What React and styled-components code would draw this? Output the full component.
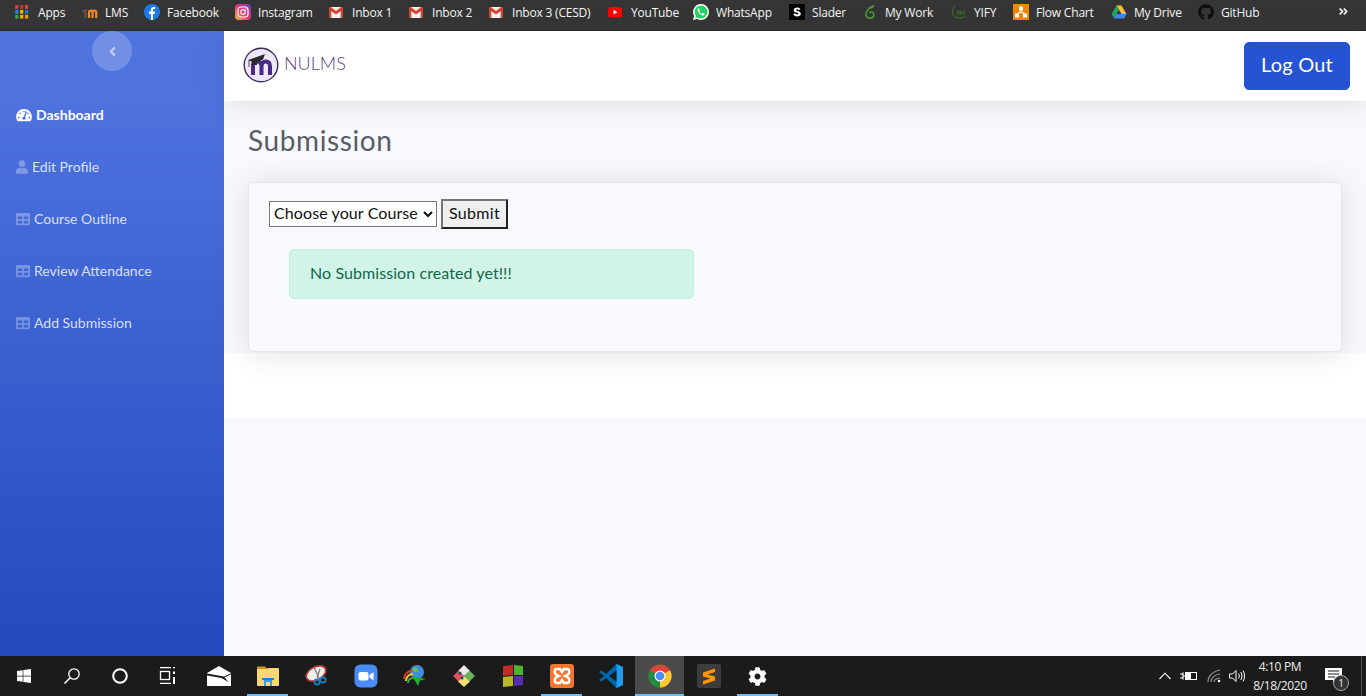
import React from 'react'
import styled, { createGlobalStyle } from 'styled-components'
import { FaTachometerAlt, FaUser, FaTable, FaAngleLeft, FaWindows, FaGithub, FaCog, FaAngleDoubleRight } from 'react-icons/fa'

const GlobalStyle = createGlobalStyle`
  html, body { margin: 0; padding: 0; height: 100%; overflow: hidden; }
  body { font-family: Lato, "Noto Sans", sans-serif; background: #f8f9fc; }
  * { box-sizing: border-box; }
`

const Screen = styled.div`
  width: 1366px;
  height: 696px;
  display: flex;
  flex-direction: column;
  overflow: hidden;
`

/* bookmarks */
const BookmarkBar = styled.div`
  height: 31px;
  flex: none;
  display: flex;
  align-items: center;
  padding: 0 0 6px 15px;
  background: #353535;
  border-bottom: 1px solid #2a2a2a;
  color: #f7f7f7;
  font-family: "Open Sans", sans-serif;
  font-size: 12px;
  letter-spacing: -0.2px;
`

const Bookmark = styled.div`
  width: ${p => p.$w}px;
  flex: none;
  display: flex;
  align-items: center;
  gap: 7px;
  white-space: nowrap;
  svg { display: block; flex: none; }
`

const MoreBookmarks = styled.div`
  margin-left: auto;
  width: 28px;
  height: 12px;
  color: #f1f1f1;
  font-size: 11px;
  svg { display: block; }
`

/* page */
const Body = styled.div`
  flex: 1;
  min-height: 0;
  display: flex;
`

const Sidebar = styled.nav`
  width: 224px;
  flex: none;
  display: flex;
  flex-direction: column;
  background: linear-gradient(180deg, #4e73df 10%, #224abe 100%);
`

const ToggleRow = styled.div`
  display: flex;
  justify-content: center;
  margin-bottom: 18px;
`

const Toggle = styled.div`
  width: 40px;
  height: 40px;
  border-radius: 50%;
  background: rgba(255, 255, 255, 0.2);
  color: rgba(255, 255, 255, 0.55);
  display: flex;
  align-items: center;
  justify-content: center;
  font-size: 15px;
`

const NavItem = styled.div`
  height: 52px;
  display: flex;
  align-items: center;
  gap: 4px;
  padding: 0 0 1px 16px;
  font-size: 14px;
  font-weight: ${p => (p.$active ? 700 : 400)};
  color: ${p => (p.$active ? '#fff' : 'rgba(255,255,255,0.8)')};
  svg {
    width: ${p => p.$iconWidth}px;
    height: 14px;
    flex: none;
    color: ${p => (p.$active ? '#fff' : 'rgba(255,255,255,0.3)')};
  }
`

const Main = styled.div`
  flex: 1;
  min-width: 0;
  display: flex;
  flex-direction: column;
  background: #f8f9fc;
`

const Topbar = styled.header`
  height: 70px;
  flex: none;
  position: relative;
  z-index: 2;
  display: flex;
  align-items: center;
  justify-content: space-between;
  padding: 0 16px 0 19px;
  background: #fff;
  box-shadow: 0 2px 28px rgba(58, 59, 69, 0.15);
`

const Brand = styled.div`
  display: flex;
  align-items: center;
  gap: 5px;
  color: #5b3f80;
  font-size: 18px;
  font-weight: 300;
  margin-bottom: 2px;
  span { margin-bottom: 5px; }
`

const LogoutButton = styled.button`
  width: 106px;
  height: 48px;
  border: 1px solid #2653d4;
  border-radius: 5px;
  background: #2653d4;
  color: #fff;
  font-family: inherit;
  font-size: 20px;
  letter-spacing: 0.2px;
  padding: 0 0 4px;
`

const Container = styled.div`
  padding: 0 24px 1px;
`

const Heading = styled.h3`
  margin: 0;
  padding-top: 20px;
  height: 81px;
  color: #5a5c69;
  font-size: 28px;
  line-height: 38px;
  font-weight: 400;
  letter-spacing: 0.6px;
`

const Card = styled.section`
  position: relative;
  z-index: 1;
  height: 170px;
  padding: 16px 20px;
  background: #f8f9fc;
  border: 1px solid #e3e6f0;
  border-radius: 5px;
  box-shadow: 0 2px 28px rgba(58, 59, 69, 0.15);
`

const Form = styled.form`
  display: flex;
  align-items: center;
  gap: 4px;
  height: 30px;
`

const Select = styled.select`
  width: 168px;
  height: 26px;
  padding-bottom: 3px;
  font-family: inherit;
  font-size: 16px;
  letter-spacing: 0.1px;
  color: #111;
  background: #fff;
`

const SubmitButton = styled.button`
  width: 67px;
  height: 30px;
  padding: 0 0 3px;
  font-family: inherit;
  font-size: 16px;
  letter-spacing: 0.3px;
  color: #111;
  background: #efefef;
  border: 2px solid;
  border-color: #767676 #222 #222 #767676;
`

const Alert = styled.div`
  width: 405px;
  height: 50px;
  margin: 20px 0 0 20px;
  padding: 0 20px 4px;
  display: flex;
  align-items: center;
  color: #0f6848;
  background: #d2f4e8;
  border: 1px solid #bff0de;
  border-radius: 5px;
  font-size: 16px;
  letter-spacing: 0.08px;
`

const WhiteBand = styled.div`
  height: 64px;
  background: #fff;
`

/* windows taskbar */
const Taskbar = styled.footer`
  height: 40px;
  flex: none;
  display: flex;
  align-items: stretch;
  background: #1b1b1b;
  color: #fff;
`

const SystemButton = styled.div`
  width: 48px;
  flex: none;
  display: flex;
  align-items: center;
  justify-content: center;
`

const Pinned = styled.div`
  display: flex;
  margin-left: 2px;
`

const AppButton = styled.div`
  position: relative;
  width: 49px;
  flex: none;
  display: flex;
  align-items: center;
  justify-content: center;
  background: ${p => (p.$focused ? '#4a4a4a' : 'transparent')};
  &::after {
    content: '';
    display: ${p => (p.$open ? 'block' : 'none')};
    position: absolute;
    bottom: 0;
    left: ${p => (p.$focused ? 0 : 4)}px;
    right: ${p => (p.$focused ? 0 : 4)}px;
    height: 2px;
    background: #76b9ed;
  }
`

const Tray = styled.div`
  margin-left: auto;
  display: flex;
  align-items: center;
  padding-right: 8px;
  border-right: 1px solid #555;
  margin-right: 4px;
`

const TrayIcon = styled.div`
  width: ${p => p.$w}px;
  flex: none;
  display: flex;
  justify-content: center;
`

const Clock = styled.div`
  width: 66px;
  flex: none;
  text-align: center;
  font-family: "Open Sans", sans-serif;
  font-size: 12px;
  line-height: 19px;
  color: #eee;
  letter-spacing: -0.35px;
`

const Notify = styled.div`
  position: relative;
  width: 40px;
  height: 40px;
  flex: none;
  display: flex;
  align-items: center;
  justify-content: center;
`

const NotifyBadge = styled.span`
  position: absolute;
  right: 4px;
  bottom: 5px;
  width: 16px;
  height: 16px;
  border-radius: 50%;
  border: 1px solid #aaa;
  background: #333;
  color: #eee;
  font-family: "Open Sans", sans-serif;
  font-size: 10px;
  line-height: 14px;
  text-align: center;
`

/* drawings */
const AppsIcon = () => {
  const colors = ['#d9432f', '#c0392b', '#e0452f', '#1e88e5', '#f4b400', '#1976d2', '#34a853', '#f4b400', '#f29900']
  return (
    <svg width="16" height="16" viewBox="0 0 16 16">
      {colors.map((c, i) => (
        <rect key={i} x={0.2 + (i % 3) * 4.9} y={1 + Math.floor(i / 3) * 4.9} width="3.2" height="3.8" fill={c} />
      ))}
    </svg>
  )
}

const LmsIcon = () => (
  <svg width="16" height="16" viewBox="0 0 16 16" fill="none">
    <path d="M7 14V8.500c0-1.400.8-2 1.800-2s1.700.6 1.700 2V14M10.500 8.500c0-1.400.9-2 1.800-2s1.900.6 1.900 2V14" stroke="#f18a20" strokeWidth="2.200" />
    <path d="M3.500 14V7.500M0 7.500l5-1.500" stroke="#6b5a4c" strokeWidth="1.800" />
  </svg>
)

const FacebookIcon = () => (
  <svg width="16" height="16" viewBox="0 0 16 16">
    <circle cx="8" cy="8" r="8" fill="#1a7cec" />
    <path d="M6.900 16V10H5V7.600h1.900V6c0-2 1.100-3 2.900-3 .8 0 1.500.1 1.500.1v2h-1c-1 0-1.300.6-1.300 1.200v1.300h2.200L10.800 10H9v6z" fill="#fff" />
  </svg>
)

const InstagramIcon = () => (
  <svg width="16" height="16" viewBox="0 0 16 16" fill="none">
    <defs>
      <linearGradient id="ig" x1="0" y1="1" x2="1" y2="0">
        <stop offset="0" stopColor="#fdc33f" />
        <stop offset="0.45" stopColor="#ee3b6e" />
        <stop offset="1" stopColor="#6a3fc8" />
      </linearGradient>
    </defs>
    <rect width="16" height="16" rx="4" fill="url(#ig)" />
    <rect x="3" y="3" width="10" height="10" rx="3" stroke="#fff" strokeWidth="1.200" />
    <circle cx="8" cy="8" r="2.300" stroke="#fff" strokeWidth="1.200" />
    <circle cx="11.100" cy="4.900" r=".7" fill="#fff" />
  </svg>
)

const GmailIcon = () => (
  <svg width="16" height="16" viewBox="1 0 16 16">
    <rect x="1" y="3" width="14" height="11" fill="#f2f2f2" />
    <path d="M1 3h2l5 4 5-4h2v11h-2.300V7.200L8 10.500 3.300 7.200V14H1z" fill="#d14836" />
  </svg>
)

const YoutubeIcon = () => (
  <svg width="16" height="16" viewBox="1 0 16 16">
    <rect x="1" y="3" width="14" height="10.500" rx="2.500" fill="#f00" />
    <path d="M6.500 5.800v4.800L10.500 8.200z" fill="#fff" />
  </svg>
)

const WhatsappIcon = () => (
  <svg width="16" height="16" viewBox="0 0 16 16">
    <path d="M8 0a8 8 0 0 1 0 16c-1.400 0-2.700-.4-3.800-1L0 16l1.100-4A8 8 0 0 1 8 0z" fill="#fff" />
    <path d="M8 1.500a6.500 6.500 0 0 1 0 13c-1.300 0-2.400-.4-3.400-1l-2.400.7.7-2.400A6.500 6.500 0 0 1 8 1.500z" fill="#25d366" />
    <path d="M5.600 4.300c-.6.400-1 1.100-.9 2 .3 2.300 2.600 4.800 5 5.200.9.100 1.800-.4 2-1.200.1-.3-.1-.5-.3-.6l-1.500-.7c-.2-.1-.4 0-.5.100l-.6.800c-.9-.3-2-1.300-2.500-2.300l.5-.6c.1-.2.200-.3.100-.5l-.7-1.700c-.1-.2-.4-.3-.6-.3z" fill="#fff" />
  </svg>
)

const SladerIcon = () => (
  <svg width="16" height="16" viewBox="0 0 16 16">
    <rect width="16" height="16" fill="#000" />
    <path d="M11.500 5.200C11 4 9.800 3.400 8.200 3.400 6.200 3.400 4.700 4.400 4.700 6c0 3.300 4.600 2 4.600 3.500 0 .6-.6.9-1.300.9-.9 0-1.500-.5-1.700-1.200l-2 .8c.5 1.600 1.900 2.500 3.800 2.500 2.200 0 3.700-1.100 3.700-2.800C11.800 6.500 7.100 7.700 7.100 6c0-.5.400-.7 1-.7.700 0 1.200.4 1.500 1z" fill="#fff" />
  </svg>
)

const MyWorkIcon = () => (
  <svg width="16" height="16" viewBox="0 0 16 16" fill="none" stroke="#4a9e35" strokeWidth="1.500">
    <path d="M12 1.500C8 3 4.500 6 4 10c-.3 3 2 4.700 4.300 4.300 2.300-.4 3.700-2.300 3.400-4.300C11.400 8 9 7.400 7 8.500" />
    <path d="M12 1.500C11 3.300 9.300 4 7.500 4.300" />
  </svg>
)

const YifyIcon = () => (
  <svg width="16" height="16" viewBox="0 0 16 16" fill="none" stroke="#3f7a2a" strokeWidth="1">
    <path d="M4 2.500C1.500 4.500 1 8 2 11c1 2 4 3.500 8 3 2-.3 3.500-1 4.500-2" />
    <path d="M6 6.500l.5 4M8 10.500V7c1-.7 1.500 0 1.500.5v3M9.500 7.500c.7-.7 1.600 0 1.600.5v2.500M14 7c-1-.6-2 0-1.500 1s1.500.8 1 2c-.3.500-1 .5-1.500.2" strokeWidth=".9" />
  </svg>
)

const FlowIcon = () => (
  <svg width="16" height="16" viewBox="0 0 16 16">
    <rect width="16" height="16" fill="#f08705" />
    <path d="M8 6v3M4 11l3-3M12 11 9 8" stroke="#fff" strokeWidth="1.200" />
    <rect x="6" y="2.500" width="4" height="4" fill="#fff" rx=".5" />
    <rect x="2" y="9.500" width="4" height="4" fill="#fff" rx=".5" />
    <rect x="10" y="9.500" width="4" height="4" fill="#fff" rx=".5" />
  </svg>
)

const DriveIcon = () => (
  <svg width="16" height="16" viewBox="0 0 16 16">
    <path d="M5.500 1.500h5L15.500 10h-5z" fill="#fbc02d" />
    <path d="M5.500 1.500 .5 10 3 14.500 8 6z" fill="#1fa463" />
    <path d="M3 14.500h10l2.500-4.500H5.500z" fill="#4285f4" />
  </svg>
)

const SearchIcon = () => (
  <svg width="18" height="18" viewBox="0 0 18 18" fill="none" stroke="#fff" strokeWidth="1.300">
    <circle cx="11" cy="7" r="5.200" />
    <path d="M7.200 10.800 1.500 16.500" strokeWidth="1.500" />
  </svg>
)

const TaskViewIcon = () => (
  <svg width="18" height="18" viewBox="0 0 18 18" fill="none" stroke="#fff" strokeWidth="1.300">
    <path d="M1 .7h11M1 16.300h11M14 .7h2M14 16.300h2" />
    <rect x="1.500" y="4.500" width="9" height="8" />
    <path d="M15 4.500V7M15 10v6" strokeWidth="2" />
  </svg>
)

const MailIcon = () => (
  <svg width="24" height="20" viewBox="0 0 24 20">
    <path d="M0 7 12 0l12 7v13H0z" fill="#fff" />
    <path d="M0 7.500 17 10.500 21.500 16 14.500 12 0 9.500z" fill="#1b1b1b" />
    <path d="M17 10.500 24 7.300v.9l-6 3z" fill="#1b1b1b" />
  </svg>
)

const ExplorerIcon = () => (
  <svg width="24" height="22" viewBox="0 0 24 22">
    <path d="M1 2.500c0-.6.400-1 1-1h7l2 2h-10z" fill="#d89a1e" />
    <rect x="1" y="3" width="22" height="18" rx="1" fill="#f7d774" />
    <path d="M1 4h10l2-1H1z" fill="#c98d18" />
    <path d="M8 14h8v7H8z" fill="#3d9be9" />
    <path d="M10 17h4v4h-4z" fill="#f7d774" />
    <path d="M6 13h12v2H6z" fill="#2a7fcb" />
  </svg>
)

const SnipIcon = () => (
  <svg width="24" height="24" viewBox="0 0 24 24" fill="none">
    <ellipse cx="11" cy="9.500" rx="10.500" ry="6.500" fill="#eee" stroke="#b23a3a" strokeWidth="1.800" transform="rotate(-28 11 9.500)" />
    <path d="M9 3 14 14M15 5l-3 9" stroke="#777" strokeWidth="1.200" />
    <circle cx="12" cy="18" r="2.600" stroke="#1c84c6" strokeWidth="1.600" />
    <circle cx="18" cy="16" r="2.600" stroke="#1c84c6" strokeWidth="1.600" />
  </svg>
)

const ZoomIcon = () => (
  <svg width="24" height="24" viewBox="0 0 24 24">
    <rect width="23" height="23" x=".5" y=".5" rx="6" fill="#4a8cf7" />
    <rect x="4.500" y="8" width="10" height="8.500" rx="2" fill="#fff" />
    <path d="M15.500 11l4-3v8.500l-4-3z" fill="#fff" />
  </svg>
)

const IdmIcon = () => (
  <svg width="26" height="26" viewBox="0 0 26 26" fill="none">
    <circle cx="15" cy="9" r="7" fill="#3f8fd8" />
    <path d="M11 5c3-1 5 0 5 2s-3 3-5 1z" fill="#6ebd45" />
    <path d="M2 16c0-5 4-8 8-8" stroke="#e23b2e" strokeWidth="2" />
    <path d="M4 18c0-4 3-7 7-7" stroke="#f3c623" strokeWidth="2" />
    <path d="M6 20c0-3 2-5 6-5" stroke="#3ba84a" strokeWidth="2" />
    <path d="M10 13l14 3-6 1.500-2 5.500z" fill="#1fae3c" />
  </svg>
)

const GitToolIcon = () => (
  <svg width="24" height="24" viewBox="0 0 24 24">
    <path d="M12 1 18 7l-6 5-6-5z" fill="#e9e9ee" />
    <path d="M1 12l5.500-5L12 12l-5.500 5.500z" fill="#e2505c" />
    <path d="M12 12l5.500-5.500L23 12l-5.500 5.500z" fill="#68b35c" />
    <path d="M6 17.500 12 12l6 5.500-6 5.500z" fill="#f2df7a" />
    <circle cx="8" cy="9" r="1.500" fill="#2c3e70" />
    <circle cx="10" cy="14" r="1.500" fill="#2c3e70" />
  </svg>
)

const BlocksIcon = () => (
  <svg width="22" height="24" viewBox="0 0 22 24">
    <path d="M1 2l10-1v10l-10 1z" fill="#c22b20" />
    <path d="M12 1l9 1v9l-9 0z" fill="#4db22e" />
    <path d="M1 13l10-1v10l-10 1z" fill="#b7b82c" />
    <path d="M12 12l9 0v9l-9 1z" fill="#5b2bb0" />
  </svg>
)

const XamppIcon = () => (
  <svg width="24" height="24" viewBox="0 0 24 24" fill="none">
    <rect width="24" height="24" rx="3" fill="#f2762e" />
    <path d="M7 5h3l2 3 2-3h3c3 0 3 5 0 6l-2 1 2 1c3 1 3 6 0 6h-3l-2-3-2 3H7c-3 0-3-5 0-6l2-1-2-1C4 10 4 5 7 5z" stroke="#fff" strokeWidth="2.400" />
  </svg>
)

const VscodeIcon = () => (
  <svg width="24" height="24" viewBox="0 0 24 24">
    <path d="M17.500 0 24 3v18l-6.500 3L7 14l-4.500 3.500L0 16l5-4-5-4 2.500-1.500L7 10z" fill="#0065a9" />
    <path d="M17.500 0 24 3v18l-6.500 3z" fill="#1f9cf0" />
    <path d="M17.500 6.500v11L10 12z" fill="#1b1b1b" />
  </svg>
)

const ChromeIcon = () => (
  <svg width="24" height="24" viewBox="0 0 24 24">
    <circle cx="12" cy="12" r="11.500" fill="#db4437" />
    <path d="M12 12 22 6.200A11.500 11.500 0 0 1 12 23.500z" fill="#fcc934" />
    <path d="M12 12 12 23.500A11.500 11.500 0 0 1 2 6.200z" fill="#1e8e3e" />
    <circle cx="12" cy="12" r="5.500" fill="#fff" />
    <circle cx="12" cy="12" r="4.300" fill="#4a8cf7" />
  </svg>
)

const SublimeIcon = () => (
  <svg width="24" height="24" viewBox="0 0 24 24">
    <rect width="24" height="24" rx="2" fill="#3c3c3c" />
    <path d="M18 4.500 6 8.500V12.500l7.500 2L6 17v3.500l12-4v-4l-7.500-2 7.500-2.500z" fill="#ff9800" />
  </svg>
)

const BatteryIcon = () => (
  <svg width="18" height="12" viewBox="0 0 18 12" fill="none" stroke="#fff">
    <rect x="5.500" y="2.500" width="11" height="7" />
    <rect x="6" y="3" width="5" height="6" fill="#fff" stroke="none" />
    <path d="M0 4h3M0 8h3M3 2.500v7M3 6h2" strokeWidth="1.200" />
  </svg>
)

const WifiIcon = () => (
  <svg width="16" height="14" viewBox="0 0 16 14" fill="none" stroke="#999" strokeWidth="1.100">
    <path d="M1 13C1 7 6 2 13 1M4 13c0-4 4-7.500 9-8M7 13c0-2 3-4 6-4" />
    <circle cx="12" cy="12" r="1.300" fill="#fff" stroke="none" />
  </svg>
)

const VolumeIcon = () => (
  <svg width="17" height="14" viewBox="0 0 17 14" fill="none" stroke="#fff" strokeWidth="1">
    <path d="M.5 5h3L7 1.500v11L3.500 9h-3z" />
    <path d="M9.500 4.500c1 1.500 1 3.500 0 5M11.800 3c1.500 2.500 1.500 5.500 0 8M14 1.500c2 3 2 8 0 11" />
  </svg>
)

const NoteIcon = () => (
  <svg width="17" height="16" viewBox="0 0 17 16">
    <path d="M0 0h17v12h-5l-4 4v-4H0z" fill="#fff" />
    <path d="M3 3h11M3 6h11M3 9h7" stroke="#1b1b1b" />
  </svg>
)

const LogoIcon = () => (
  <svg width="36" height="36" viewBox="0 0 36 36" fill="none">
    <circle cx="18" cy="18" r="16.800" fill="#efe7fb" stroke="#3a2a55" strokeWidth="1.400" />
    <path d="M10 28V16.500M18.500 28V19.500c0-3-1.500-5-4.200-5H8.500M27 28V19.500c0-3-1.500-5-4.200-5s-4.300 2-4.300 5" stroke="#4a2a86" strokeWidth="4" />
    <path d="M5 13 22 7l-2 5.500-8 3.500z" fill="#2a2a2a" />
    <path d="M9 14v4h5v-4z" fill="#2a2a2a" />
    <path d="M6 13v7" stroke="#2a2a2a" strokeWidth=".8" />
  </svg>
)

const bookmarks = [
  { label: 'Apps', w: 67, icon: <AppsIcon /> },
  { label: 'LMS', w: 62, icon: <LmsIcon /> },
  { label: 'Facebook', w: 91, icon: <FacebookIcon /> },
  { label: 'Instagram', w: 94, icon: <InstagramIcon /> },
  { label: 'Inbox 1', w: 80, icon: <GmailIcon /> },
  { label: 'Inbox 2', w: 80, icon: <GmailIcon /> },
  { label: 'Inbox 3 (CESD)', w: 119, icon: <GmailIcon /> },
  { label: 'YouTube', w: 85, icon: <YoutubeIcon /> },
  { label: 'WhatsApp', w: 96, icon: <WhatsappIcon /> },
  { label: 'Slader', w: 73, icon: <SladerIcon /> },
  { label: 'My Work', w: 89, icon: <MyWorkIcon /> },
  { label: 'YIFY', w: 62, icon: <YifyIcon /> },
  { label: 'Flow Chart', w: 98, icon: <FlowIcon /> },
  { label: 'My Drive', w: 87, icon: <DriveIcon /> },
  { label: 'GitHub', w: 80, icon: <FaGithub size={16} color="#0d0d0d" /> },
]

const navItems = [
  { label: 'Dashboard', icon: <FaTachometerAlt />, iconWidth: 16, active: true },
  { label: 'Edit Profile', icon: <FaUser />, iconWidth: 12 },
  { label: 'Course Outline', icon: <FaTable />, iconWidth: 14 },
  { label: 'Review Attendance', icon: <FaTable />, iconWidth: 14 },
  { label: 'Add Submission', icon: <FaTable />, iconWidth: 14 },
]

const pinned = [
  { icon: <MailIcon /> },
  { icon: <ExplorerIcon />, open: true },
  { icon: <SnipIcon /> },
  { icon: <ZoomIcon /> },
  { icon: <IdmIcon /> },
  { icon: <GitToolIcon /> },
  { icon: <BlocksIcon /> },
  { icon: <XamppIcon />, open: true },
  { icon: <VscodeIcon /> },
  { icon: <ChromeIcon />, open: true, focused: true },
  { icon: <SublimeIcon /> },
  { icon: <FaCog size={19} color="#fff" />, open: true },
]

export default function App() {
  return (
    <Screen>
      <GlobalStyle />
      <BookmarkBar>
        {bookmarks.map(b => (
          <Bookmark key={b.label} $w={b.w}>
            {b.icon}
            <span>{b.label}</span>
          </Bookmark>
        ))}
        <MoreBookmarks>
          <FaAngleDoubleRight />
        </MoreBookmarks>
      </BookmarkBar>

      <Body>
        <Sidebar>
          <ToggleRow>
            <Toggle>
              <FaAngleLeft />
            </Toggle>
          </ToggleRow>
          {navItems.map(item => (
            <NavItem key={item.label} $active={item.active} $iconWidth={item.iconWidth}>
              {item.icon}
              <span>{item.label}</span>
            </NavItem>
          ))}
        </Sidebar>

        <Main>
          <Topbar>
            <Brand>
              <LogoIcon />
              <span>NULMS</span>
            </Brand>
            <LogoutButton>Log Out</LogoutButton>
          </Topbar>
          <Container>
            <Heading>Submission</Heading>
            <Card>
              <Form>
                <Select defaultValue="">
                  <option value="">Choose your Course</option>
                </Select>
                <SubmitButton type="button">Submit</SubmitButton>
              </Form>
              <Alert>No Submission created yet!!!</Alert>
            </Card>
          </Container>
          <WhiteBand />
        </Main>
      </Body>

      <Taskbar>
        <SystemButton>
          <FaWindows size={16} color="#fff" />
        </SystemButton>
        <SystemButton>
          <SearchIcon />
        </SystemButton>
        <SystemButton>
          <svg width="16" height="16" viewBox="0 0 16 16" fill="none" stroke="#fff" strokeWidth="2">
            <circle cx="8" cy="8" r="6.800" />
          </svg>
        </SystemButton>
        <SystemButton>
          <TaskViewIcon />
        </SystemButton>
        <Pinned>
          {pinned.map((p, i) => (
            <AppButton key={i} $open={p.open} $focused={p.focused}>
              {p.icon}
            </AppButton>
          ))}
        </Pinned>
        <Tray>
          <TrayIcon $w={20}>
            <svg width="12" height="8" viewBox="0 0 12 8" fill="none" stroke="#fff" strokeWidth="1.100">
              <path d="M.5 7 6 1.200 11.500 7" />
            </svg>
          </TrayIcon>
          <TrayIcon $w={28}>
            <BatteryIcon />
          </TrayIcon>
          <TrayIcon $w={24}>
            <WifiIcon />
          </TrayIcon>
          <TrayIcon $w={20}>
            <VolumeIcon />
          </TrayIcon>
          <Clock>
            <div>4:10 PM</div>
            <div>8/18/2020</div>
          </Clock>
          <Notify>
            <NoteIcon />
            <NotifyBadge>1</NotifyBadge>
          </Notify>
        </Tray>
      </Taskbar>
    </Screen>
  )
}
